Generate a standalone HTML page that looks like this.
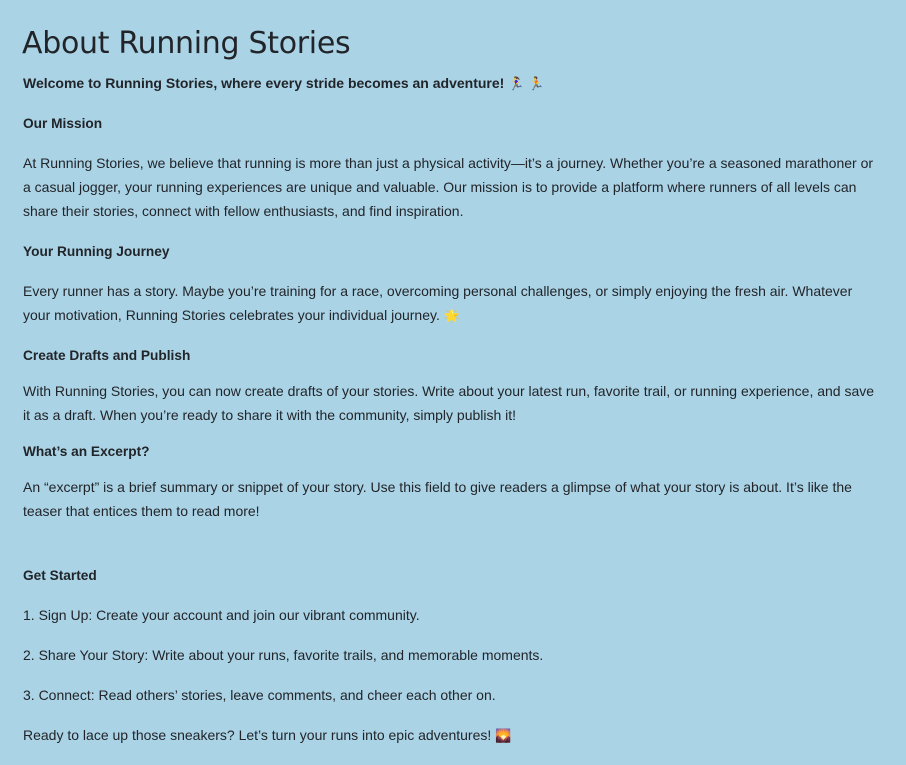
<!DOCTYPE html>
<html><head><meta charset="utf-8"><style>
html,body{margin:0;padding:0;}
body{width:906px;height:765px;background:#abd3e6;color:#212529;font-family:"Liberation Sans",Arial,sans-serif;font-size:14px;position:relative;overflow:hidden;}
.l{position:absolute;left:23px;line-height:24px;white-space:nowrap;}
h1{position:absolute;left:22px;top:22px;margin:0;font-family:"DejaVu Sans","Liberation Sans",sans-serif;font-weight:normal;font-size:30px;line-height:44px;letter-spacing:-0.3px;}
b{font-weight:bold;font-size:13.7px;}
.e{font-size:13px;}
</style></head><body>
<h1>About Running Stories</h1>
<div class="l" style="top:71px"><b style="font-size:14px">Welcome to Running Stories, where every stride becomes an adventure! <span class="e">🏃‍♀️ 🏃</span></b></div>
<div class="l" style="top:111px"><b>Our Mission</b></div>
<div class="l" style="top:151px">At Running Stories, we believe that running is more than just a physical activity—it’s a journey. Whether you’re a seasoned marathoner or<br>a casual jogger, your running experiences are unique and valuable. Our mission is to provide a platform where runners of all levels can<br>share their stories, connect with fellow enthusiasts, and find inspiration.</div>
<div class="l" style="top:239px"><b>Your Running Journey</b></div>
<div class="l" style="top:279px">Every runner has a story. Maybe you’re training for a race, overcoming personal challenges, or simply enjoying the fresh air. Whatever<br>your motivation, Running Stories celebrates your individual journey. <span class="e">🌟</span></div>
<div class="l" style="top:343px"><b>Create Drafts and Publish</b></div>
<div class="l" style="top:379px">With Running Stories, you can now create drafts of your stories. Write about your latest run, favorite trail, or running experience, and save<br>it as a draft. When you’re ready to share it with the community, simply publish it!</div>
<div class="l" style="top:439px"><b>What’s an Excerpt?</b></div>
<div class="l" style="top:475px">An “excerpt” is a brief summary or snippet of your story. Use this field to give readers a glimpse of what your story is about. It’s like the<br>teaser that entices them to read more!</div>
<div class="l" style="top:563px"><b>Get Started</b></div>
<div class="l" style="top:603px">1. Sign Up: Create your account and join our vibrant community.</div>
<div class="l" style="top:643px">2. Share Your Story: Write about your runs, favorite trails, and memorable moments.</div>
<div class="l" style="top:683px">3. Connect: Read others’ stories, leave comments, and cheer each other on.</div>
<div class="l" style="top:723px">Ready to lace up those sneakers? Let’s turn your runs into epic adventures! <span class="e">🌄</span></div>
</body></html>
